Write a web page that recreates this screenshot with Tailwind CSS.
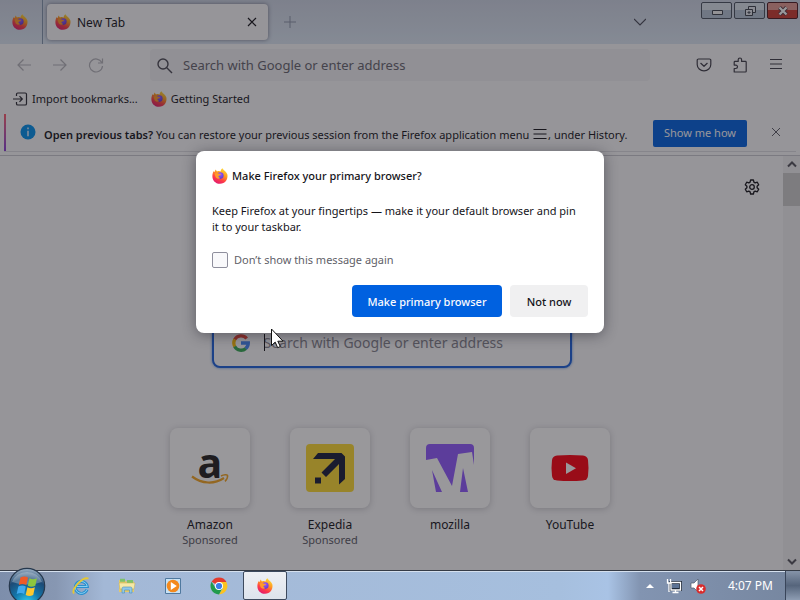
<!DOCTYPE html>
<html lang="en">
<head>
<meta charset="utf-8">
<title>New Tab</title>
<script src="https://cdn.jsdelivr.net/npm/@tailwindcss/browser@4"></script>
</head>
<body class="h-screen overflow-hidden flex flex-col font-['Noto_Sans',sans-serif] text-xs text-[#15141a]">
<svg class="absolute size-0" aria-hidden="true">
  <defs>
    <linearGradient id="flame" x1="0.8" y1="0" x2="0.3" y2="1"><stop offset="0" stop-color="#ffe23a"/><stop offset=".4" stop-color="#ff9a20"/><stop offset=".7" stop-color="#ff3c47"/><stop offset="1" stop-color="#e01a70"/></linearGradient>
    <radialGradient id="globe" cx=".5" cy=".3" r=".8"><stop offset="0" stop-color="#9a5cff"/><stop offset="1" stop-color="#5a33c5"/></radialGradient>
    <radialGradient id="orb" cx=".5" cy="1" r=".95"><stop offset="0" stop-color="#35d6f5"/><stop offset=".4" stop-color="#1377ab"/><stop offset=".75" stop-color="#1d4a75"/><stop offset="1" stop-color="#8fa5bb"/></radialGradient>
    <symbol id="firefox" viewBox="0 0 16 16">
      <path fill="url(#flame)" d="M1.500 3.200 2.600 4.100 3.600 1.600 5 3.400C6.500 2.800 8 3 8.700 3.500 8.600 2 9.500.800 10.600.200 11 2 14.200 3.200 15.300 6.200 16.200 10 14.300 15.700 8 15.800 2.800 15.700.300 11.800.400 8 .400 6 .900 4.500 1.500 3.200Z"/>
      <circle cx="8.300" cy="7.600" r="3.300" fill="url(#globe)"/>
      <path fill="#ff9a2a" d="M2.600 5.500C4 4.600 6 4.900 7.300 5.700L9 6.300C8.700 7.400 7.500 7.500 6.800 7.800 6.100 8.400 6.700 9.800 8.400 9.900 7 11.300 4 10.900 3.400 8.600Z"/>
    </symbol>
  </defs>
</svg>

<main class="relative flex-1 min-h-0 flex flex-col bg-[#f9f9fb]">
  <header class="flex h-11 shrink-0 items-start bg-linear-to-b from-[#cdd5e4] to-[#dbe6f3]">
    <button aria-label="Firefox View" class="flex h-11 w-[43px] items-center border-r border-[#8396ae] pl-3"><svg class="size-4"><use href="#firefox"/></svg></button>
    <div class="ml-1 mt-1 flex h-9 w-[221px] items-center gap-1.5 rounded bg-[#f9f9fb] pl-2 pr-2.5 shadow-[0_0_4px_rgba(60,60,80,0.6)]">
      <svg class="size-4"><use href="#firefox"/></svg>
      <span class="flex-1 pt-0.5">New Tab</span>
      <button aria-label="Close tab"><svg class="size-3" viewBox="0 0 12 12" stroke="#15141a" stroke-width="1.200"><path d="M2 2l8 8M10 2l-8 8"/></svg></button>
    </div>
    <button aria-label="New tab" class="ml-4 mt-4"><svg class="size-3" viewBox="0 0 12 12" stroke="#8b95a8"><path d="M6 0v12M0 6h12"/></svg></button>
    <button aria-label="List all tabs" class="ml-auto mr-[55px] mt-4"><svg class="size-3" viewBox="0 0 12 12" fill="none" stroke="#4a4b58" stroke-width="1.200"><path d="M0 3l6 6 6-6"/></svg></button>
    <div class="mr-0.5 mt-0.5 flex gap-0.5">
      <button aria-label="Minimize" class="flex h-[17px] w-[31px] items-center justify-center rounded-xs border border-[#4a5261] bg-linear-to-b from-[#dbe3ed] from-50% to-[#b4c4d6] to-50%"><svg class="h-3 w-4" viewBox="0 0 16 12" fill="#f4f4f4" stroke="#3c424e"><path d="M3.500 5.500h10v4h-10z"/></svg></button>
      <button aria-label="Restore" class="flex h-[17px] w-[31px] items-center justify-center rounded-xs border border-[#4a5261] bg-linear-to-b from-[#dbe3ed] from-50% to-[#b4c4d6] to-50%"><svg class="h-3 w-4" viewBox="0 0 16 12" fill="#e4e8ee" stroke="#3c424e"><path d="M6.500 1.500h7v6h-7z"/><path d="M3.500 4.500h7v6h-7zM6 7h2v1H6z"/></svg></button>
      <button aria-label="Close" class="flex h-[17px] w-[31px] items-center justify-center rounded-xs border border-[#4f1a22] bg-linear-to-b from-[#e39a92] from-45% to-[#cb3b30] to-50%"><svg class="h-3 w-4" viewBox="0 0 16 12"><path d="M4.500 2.500l7 7M11.500 2.500l-7 7" stroke="#5c3a44" stroke-width="4"/><path d="M4.500 2.500l7 7M11.500 2.500l-7 7" stroke="#fff" stroke-width="2.300"/></svg></button>
    </div>
  </header>

  <div class="flex h-10 shrink-0 items-center px-4 pt-0.5">
    <div class="flex w-[134px] gap-5">
      <button aria-label="Back"><svg class="size-4" viewBox="0 0 16 16" fill="none" stroke="#b4b4bb" stroke-width="1.200"><path d="M15 8H2M7.500 2.500L2 8l5.500 5.500"/></svg></button>
      <button aria-label="Forward"><svg class="size-4" viewBox="0 0 16 16" fill="none" stroke="#b4b4bb" stroke-width="1.200"><path d="M1 8h13M8.500 2.500L14 8l-5.500 5.500"/></svg></button>
      <button aria-label="Reload"><svg class="size-4" viewBox="0 0 16 16" fill="none" stroke="#b4b4bb" stroke-width="1.200"><path d="M13.800 5.500A6.500 6.500 0 1 0 14.500 9M14.500 1.500v4.500H10"/></svg></button>
    </div>
    <label class="flex h-8 w-[500px] items-center gap-2.5 rounded bg-[#f0f0f4] pl-[7px] pt-px">
      <svg class="size-4" viewBox="0 0 16 16" fill="none" stroke="#4a4954" stroke-width="1.400"><circle cx="6" cy="6" r="5"/><path d="M9.800 9.800l5.200 5.200"/></svg>
      <input aria-label="Address" placeholder="Search with Google or enter address" class="min-w-0 flex-1 bg-transparent text-[13px] outline-none placeholder:text-[#66656f]">
    </label>
    <div class="ml-auto flex gap-5">
      <button aria-label="Save to Pocket"><svg class="size-4" viewBox="0 0 16 16" fill="none" stroke="#3f3e49" stroke-width="1.200" stroke-linecap="round" stroke-linejoin="round"><path d="M2.500 2h11a1.300 1.300 0 0 1 1.300 1.300V7.500a6.800 6.300 0 0 1-13.600 0V3.300A1.300 1.300 0 0 1 2.500 2zM4.800 6.300L8 9.300l3.200-3"/></svg></button>
      <button aria-label="Extensions"><svg class="size-4" viewBox="0 0 16 16" fill="none" stroke="#3f3e49" stroke-width="1.200" stroke-linejoin="round"><path d="M2.200 15V11.500H3.800a1.700 1.700 0 0 0 0-3.400H2.200V5.200a.8.800 0 0 1 .8-.8H6.200V2.700a1.700 1.700 0 0 1 3.400 0V4.400h3.800a.8.800 0 0 1 .8.800v9a.8.800 0 0 1-.8.800z"/></svg></button>
      <button aria-label="Application menu"><svg class="size-4" viewBox="0 0 16 16" stroke="#3f3e49" stroke-width="1.200"><path d="M2 2.500h12M2 7h12M2 11.500h12"/></svg></button>
    </div>
  </div>

  <nav class="flex h-[30px] shrink-0 items-center gap-[13px] px-3 text-[11px]">
    <a href="#" class="flex items-center gap-1"><svg class="size-4" viewBox="0 0 16 16" fill="none" stroke="#2b2a33" stroke-width="1.200"><path d="M4.500 5V3.300A1.300 1.300 0 0 1 5.800 2h7.400a1.300 1.300 0 0 1 1.300 1.300v9.400a1.300 1.300 0 0 1-1.300 1.300H5.800a1.300 1.300 0 0 1-1.300-1.300V11M1 8h9M7.500 5.200L10.300 8l-2.800 2.800"/></svg>Import bookmarks...</a>
    <a href="#" class="flex items-center gap-1"><svg class="size-4"><use href="#firefox"/></svg>Getting Started</a>
  </nav>

  <section class="flex h-[42px] shrink-0 items-center border-b border-[#c9c9d0] px-1 pb-1 text-[11px]">
    <div class="flex h-[38px] flex-1 items-center border-b border-[#dcdce2]">
      <div class="h-full w-0.5 bg-linear-to-b from-[#ff5a6a] to-[#8a3bd8]"></div>
      <svg class="ml-3.5 mr-2 size-4 shrink-0" viewBox="0 0 16 16"><circle cx="8" cy="8" r="7.500" fill="#0090ed"/><path d="M7.200 3.500h1.600v1.800H7.200zM7.200 6.700h1.600v5.600H7.200z" fill="#d5eaff"/></svg>
      <p class="flex items-center whitespace-pre pt-1.5"><span class="font-semibold">Open previous tabs?</span> You can restore your previous session from the Firefox application menu <svg class="size-4" viewBox="0 0 16 16" stroke="#15141a" stroke-width="1.200"><path d="M1.500 2.500h13M1.500 7h13M1.500 11.500h13"/></svg>, under History.</p>
      <button class="ml-auto mr-[23px] mt-0.5 h-[27px] w-[94px] shrink-0 rounded-xs bg-[#0061e0] text-[#fbfbfe]">Show me how</button>
      <button aria-label="Dismiss" class="mr-3.5"><svg class="size-3" viewBox="0 0 12 12" stroke="#5b5b66"><path d="M2 2l8 8M10 2l-8 8"/></svg></button>
    </div>
  </section>

  <div class="flex min-h-0 flex-1">
    <section class="relative flex flex-1 flex-col items-center">
      <button aria-label="Personalize new tab" class="absolute right-[23px] top-[23px]"><svg class="size-4" viewBox="0 0 16 16" fill="none" stroke="#15141a" stroke-width="1.300" stroke-linejoin="round"><path d="M6.600 1h2.800l.5 2.100 1.300.8 2.100-.7 1.400 2.500-1.600 1.500v1.600l1.600 1.500-1.400 2.500-2.100-.7-1.300.8L9.400 15H6.600l-.5-2.100-1.300-.8-2.100.7-1.400-2.500 1.600-1.500V7.200L1.300 5.700l1.400-2.500 2.100.7 1.300-.8z"/><circle cx="8" cy="8" r="2.300"/></svg></button>
      <label class="mt-[162px] flex h-[50px] w-[360px] items-center gap-3.5 rounded-lg border-2 border-[#1c62dc] bg-[#fbfbfe] pb-px pl-[18px] shadow-[0_0_2px_1px_rgba(0,97,224,0.3)]">
        <svg class="size-[18px]" viewBox="0 0 18 18" fill="none" stroke-width="3.300"><path d="M14.700 4.500A7.300 7.300 0 0 0 2.700 5.500" stroke="#ea4335"/><path d="M2.800 5.400a7.300 7.300 0 0 0 0 7.200" stroke="#fbbc05"/><path d="M2.700 12.500a7.300 7.300 0 0 0 11.200 1.900" stroke="#34a853"/><path d="M9 9h7.300a7.300 7.300 0 0 1-2.600 5.600" stroke="#4285f4"/></svg>
        <input aria-label="Search the web" placeholder="Search with Google or enter address" class="h-7 min-w-0 flex-1 bg-transparent text-sm outline-none placeholder:text-[#85848e]">
      </label>
      <div class="mr-[3px] mt-[60px] flex text-center leading-4">
        <a href="#" class="flex w-[120px] flex-col items-center"><span class="mb-[9px] flex size-20 items-center justify-center rounded-lg bg-white shadow-[0_1px_6px_rgba(58,57,68,0.25)]"><svg class="size-12 overflow-visible" viewBox="0 0 48 48"><text x="24" y="34" text-anchor="middle" font-family="Open Sans" font-weight="700" font-size="41" fill="#221f1f">a</text><path d="M6 32.500c10 7.500 22 8 32 1.500" fill="none" stroke="#f5a623" stroke-width="2.200"/><path d="M35 32c3-1.500 6-1.500 6.500-.6.400 1.500-.8 4.500-2.500 6" fill="none" stroke="#f5a623" stroke-width="1.600"/></svg></span>Amazon<small class="text-[11px] leading-[14px] text-[#5b5b66]">Sponsored</small></a>
        <a href="#" class="flex w-[120px] flex-col items-center"><span class="mb-[9px] flex size-20 items-center justify-center rounded-lg bg-white shadow-[0_1px_6px_rgba(58,57,68,0.25)]"><svg class="size-12" viewBox="0 0 48 48"><rect width="48" height="48" rx="4" fill="#fddb32"/><path d="M12 9h23.500L39 12.500V35l-6 5.500V20L20 33l-4.500-4.500L29 15H7zM9 33.500h6v6H9z" fill="#191e3b"/></svg></span>Expedia<small class="text-[11px] leading-[14px] text-[#5b5b66]">Sponsored</small></a>
        <a href="#" class="flex w-[120px] flex-col items-center"><span class="mb-[9px] flex size-20 items-center justify-center rounded-lg bg-white shadow-[0_1px_6px_rgba(58,57,68,0.25)]"><svg class="size-12" viewBox="0 0 48 48" fill="#9059ff"><path d="M4 0h40a4 4 0 0 1 4 4v17L46 8 32 10 26 42 11 14 0 16V4a4 4 0 0 1 4-4zM6 26l10 22h-6zM37 24l5 24h-8z"/></svg></span>mozilla</a>
        <a href="#" class="flex w-[120px] flex-col items-center"><span class="mb-[9px] flex size-20 items-center justify-center rounded-lg bg-white shadow-[0_1px_6px_rgba(58,57,68,0.25)]"><svg class="size-12" viewBox="0 0 48 48"><path d="M11 11.500q13-1 26 0 4.500.5 5 4.500 1 8 0 16-.5 4-5 4.500-13 1-26 0-4.500-.5-5-4.500-1-8 0-16 .5-4 5-4.500z" fill="#ff0012"/><path d="M20 18.500v11.500l10-5.700z" fill="#fff"/></svg></span>YouTube</a>
      </div>
    </section>
    <div class="flex w-[17px] shrink-0 flex-col items-center justify-between bg-[#f0f0f2] py-1">
      <svg class="h-2 w-2.5" viewBox="0 0 10 8" fill="none" stroke="#55555d" stroke-width="2"><path d="M1 6.500l4-4 4 4"/></svg>
      <div class="mb-auto mt-[5px] h-[33px] w-full bg-[#cdcdcd]"></div>
      <svg class="h-2 w-2.5" viewBox="0 0 10 8" fill="none" stroke="#55555d" stroke-width="2"><path d="M1 1.500l4 4 4-4"/></svg>
    </div>
  </div>

  <div class="absolute inset-0 flex items-start justify-center bg-[#1c1b22]/45 pt-[151px]">
    <div role="dialog" aria-labelledby="ask" class="flex w-[408px] flex-col rounded-lg bg-white p-4 text-[11px] leading-4 shadow-[0_2px_14px_rgba(20,20,30,0.45)]">
      <h1 id="ask" class="flex items-center gap-1 font-medium"><svg class="size-4"><use href="#firefox"/></svg><span class="pt-px">Make Firefox your primary browser?</span></h1>
      <p class="mt-[19px] pr-2">Keep Firefox at your fingertips — make it your default browser and pin it to your taskbar.</p>
      <label class="mt-4 flex items-center gap-1.5 text-[#5f5f69]"><input type="checkbox" class="size-4 appearance-none rounded-xs border border-[#8f8f9d] bg-[#f9f9fb]"><span class="pt-px">Don’t show this message again</span></label>
      <div class="mt-[17px] flex justify-end gap-2 font-medium">
        <button class="h-8 w-[150px] rounded bg-[#0061e0] pt-px text-[#fbfbfe]">Make primary browser</button>
        <button class="h-8 w-[78px] rounded bg-[#f0f0f1] pt-px">Not now</button>
      </div>
    </div>
  </div>
  <div class="absolute left-[264px] top-[334px] h-[17px] w-px bg-[#15141a]"></div>
  <svg class="absolute left-[270px] top-[328px] h-[22px] w-4" viewBox="0 0 16 22" fill="#fff" stroke="#111"><path d="M1.500 1v16.500l3.700-3.400 2.500 5.600 2.600-1.200-2.500-5.300h5.200z"/></svg>
</main>

<footer class="relative flex h-[30px] shrink-0 items-center border-t border-[#353b46] bg-[linear-gradient(90deg,#7d8eab_0%,#8797b2_7%,#a3b8d6_13%,#a6bfde_70%,#a9c3e5_76%,#8294b1_80%,#76869f_100%)] shadow-[inset_0_1px_0_#d5e0ee]">
  <button aria-label="Start" class="absolute bottom-[-5px] left-2 size-[38px]"><svg class="size-[38px]" viewBox="0 0 38 38"><circle cx="19" cy="19" r="17.700" fill="url(#orb)" stroke="#26384d" stroke-width="1.200"/><path d="M4 15a15.500 13.500 0 0 1 30 0q-15 5-30 0z" fill="#fff" opacity=".28"/><path d="M12.500 10.500q4-2 7.500 0l-1.700 7.500q-3.500-2-7.500 0z" fill="#ef5a28"/><path d="M21.500 11.300q3.500 2 7.500 0l-1.700 7.500q-4 2-7.500 0z" fill="#8cc63e"/><path d="M10.300 19.500q4-2 7.500 0L16.200 27q-3.500-2-7.500 0z" fill="#3fa9ee"/><path d="M19.400 20.200q3.500 2 7.500 0L25.200 28q-4 2-7.500 0z" fill="#fdc82e"/></svg></button>
  <nav class="ml-[72px] flex h-full items-center gap-7">
    <button aria-label="Internet Explorer"><svg class="size-[18px]" viewBox="0 0 18 18" fill="none"><path d="M15 12.500A6 6 0 1 1 15.300 9.500H5" stroke="#2a8fce" stroke-width="3"/><path d="M15 12.500A6 6 0 1 1 15.300 9.500H5" stroke="#86d0f2" stroke-width="1"/><path d="M2 16.500C-1 13 10-.500 16.500 1.500" stroke="#e5c832" stroke-width="1.800"/></svg></button>
    <button aria-label="Windows Explorer"><svg class="size-[18px]" viewBox="0 0 18 18"><path d="M1 3h6l1 1.500h8V15H1z" fill="#e3c968"/><path d="M2 1.800h5v3H2zM9 3h6v3H9z" fill="#7ec26c"/><path d="M1 6h16l-1 6H2z" fill="#f6e9a6" stroke="#c5ad57" stroke-width=".5"/><path d="M4 16v-4.500q0-1.500 1.500-1.500h7q1.500 0 1.500 1.500V16h-2.500v-3h-5v3z" fill="#8fc8e8" stroke="#4e8fb8" stroke-width=".6"/></svg></button>
    <button aria-label="Media Player"><svg class="size-[18px]" viewBox="0 0 18 18"><path d="M1.500 1.500h15v15h-15z" fill="#c8e2f5" stroke="#50799f"/><circle cx="9" cy="9" r="6.300" fill="#f4891c"/><path d="M6.800 5v8l6-4z" fill="#fff"/></svg></button>
    <button aria-label="Chrome"><svg class="size-[18px]" viewBox="0 0 18 18"><path d="M9 9L1.600 4.800A8.500 8.500 0 0 1 16.400 4.800z" fill="#e33b2e"/><path d="M9 9V5h7.400A8.500 8.500 0 0 1 9 17.500l4-6.500z" fill="#fcc31e"/><path d="M1.600 4.800A8.500 8.500 0 0 0 9 17.500L12.500 11 5.500 11z" fill="#229b4c"/><circle cx="9" cy="9" r="4" fill="#fff"/><circle cx="9" cy="9" r="3.100" fill="#3b7de8"/></svg></button>
  </nav>
  <button aria-label="Firefox" class="ml-[15px] flex h-[29px] w-11 items-center justify-center rounded-xs border border-[#3d4a5e] bg-linear-to-b from-[#eef0f4] to-[#dde3ec]"><svg class="size-4"><use href="#firefox"/></svg></button>
  <div class="ml-auto flex h-full items-center text-white">
    <svg class="mr-3 h-1 w-2" viewBox="0 0 8 4"><path d="M0 4l4-4 4 4z" fill="#fff"/></svg>
    <svg class="mr-2 size-4" viewBox="0 0 16 16"><path d="M4.500 4.500h10v7h-10z" fill="#5d7394" stroke="#222c3c" stroke-width="3"/><path d="M5 4.500h9.500v7.500H5zM9.500 12v2.500M6.500 14.500h6M1.500 1v4h3V1M3 5v9" fill="none" stroke="#fff" stroke-width="1.300"/></svg>
    <svg class="mr-[22px] size-4" viewBox="0 0 16 16"><path d="M1 5h3l4-4v13l-4-4H1z" fill="#fff" stroke="#4d596b" stroke-width=".7"/><circle cx="11" cy="11" r="4.800" fill="#d92c2c"/><path d="M9 9l4 4M13 9l-4 4" stroke="#fff" stroke-width="1.500"/></svg>
    <time>4:07 PM</time>
    <button aria-label="Show desktop" class="ml-3 h-full w-[15px] border-l border-[#39455a] bg-linear-to-b from-[#8694a9] via-[#56657c] to-[#8e9db3]"></button>
  </div>
</footer>
</body>
</html>
